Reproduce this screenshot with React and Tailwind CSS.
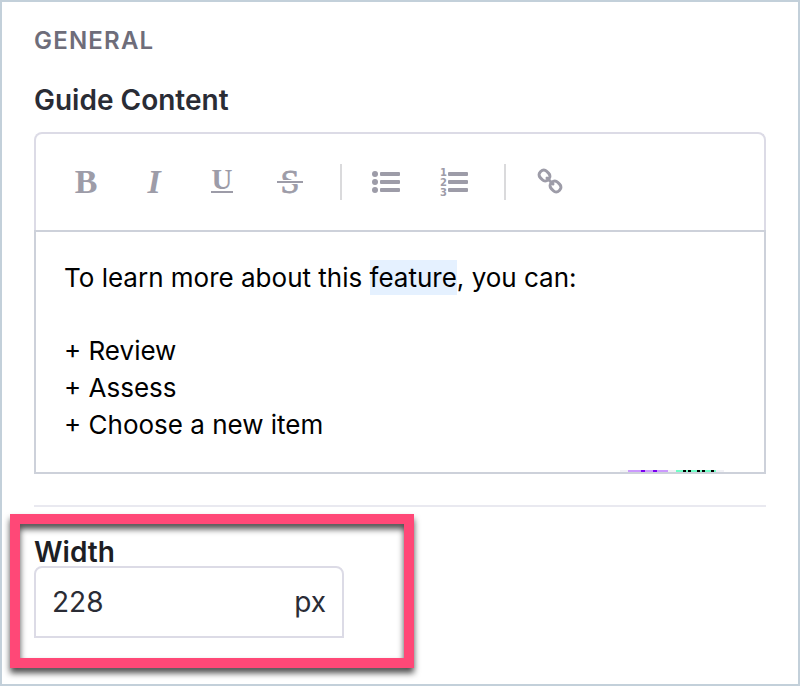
import { useState } from 'react';

function ToolbarButton({ label, children }) {
  return (
    <button
      type="button"
      aria-label={label}
      title={label}
      className="flex h-9 w-9 items-center justify-center text-[#9d9ca8] hover:text-[#6e6d7a]"
    >
      {children}
    </button>
  );
}

function Separator() {
  return <div className="h-9 w-[2px] bg-[#dadadc]" />;
}

function ListLines() {
  return (
    <>
      <rect x="8" y="4" width="20" height="4" rx="1" />
      <rect x="8" y="12" width="20" height="4" rx="1" />
      <rect x="8" y="20" width="20" height="4" rx="1" />
    </>
  );
}

function Toolbar() {
  return (
    <div
      role="toolbar"
      aria-label="Formatting"
      className="flex h-[98px] items-center rounded-t-lg border-2 border-b-0 border-[#dcdbe6] pl-8 font-['Liberation_Serif',serif]"
    >
      <div className="flex gap-8">
        <ToolbarButton label="Bold">
          <span className="text-[34px] leading-9 font-bold">B</span>
        </ToolbarButton>
        <ToolbarButton label="Italic">
          <span className="text-[34px] leading-9 font-bold italic">I</span>
        </ToolbarButton>
        <ToolbarButton label="Underline">
          <svg width="28" height="36" viewBox="0 0 28 36" fill="currentColor" className="overflow-visible">
            <text x="14" y="25" fontSize="29" fontWeight="700" textAnchor="middle">U</text>
            <rect x="3" y="27" width="22" height="2" />
          </svg>
        </ToolbarButton>
        <ToolbarButton label="Strikethrough">
          <svg width="26" height="36" viewBox="0 0 26 36" fill="currentColor" className="overflow-visible">
            <text x="13" y="29" fontSize="34" textAnchor="middle" stroke="currentColor" strokeWidth="0.8">S</text>
            <rect y="16" width="26" height="4" fill="#fff" />
            <rect y="17" width="26" height="2" />
          </svg>
        </ToolbarButton>
      </div>
      <div className="ml-8 flex items-center">
        <Separator />
        <div className="mr-8 ml-[26px] flex gap-8">
          <ToolbarButton label="Bullet list">
            <svg width="28" height="28" viewBox="0 0 28 28" fill="currentColor">
              <circle cx="3" cy="6" r="3" />
              <circle cx="3" cy="14" r="3" />
              <circle cx="3" cy="22" r="3" />
              <ListLines />
            </svg>
          </ToolbarButton>
          <ToolbarButton label="Numbered list">
            <svg width="28" height="28" viewBox="0 0 28 28" fill="currentColor" className="overflow-visible">
              <g fontFamily="DejaVu Sans, sans-serif" fontSize="10" fontWeight="700">
                <text x="0" y="8">1</text>
                <text x="0" y="18">2</text>
                <text x="0" y="28">3</text>
              </g>
              <ListLines />
            </svg>
          </ToolbarButton>
        </div>
        <Separator />
        <div className="ml-[26px]">
          <ToolbarButton label="Link">
            <svg width="28" height="28" viewBox="0 0 28 28" fill="none" stroke="currentColor" strokeWidth="3" strokeLinecap="round">
              <rect x="3" y="3" width="11" height="9" rx="4" transform="rotate(45 8.5 7.5)" />
              <rect x="14" y="14" width="11" height="9" rx="4" transform="rotate(45 19.5 18.5)" />
              <path d="M11 10l6 6" />
            </svg>
          </ToolbarButton>
        </div>
      </div>
    </div>
  );
}

function GuideContent() {
  return (
    <section>
      <h3 className="text-[28px] leading-8 font-semibold text-[#2a2c35]">Guide Content</h3>
      <div className="mt-4">
        <Toolbar />
        <div className="relative overflow-hidden border-2 border-[#cdd1da] px-7 pt-7 pb-[29px] text-[26px] text-black">
          <p className="leading-9">
            To learn more about this <mark className="bg-[#e5f1ff] py-[2px] text-inherit">feature</mark>, you can:
          </p>
          <div className="mt-9 leading-[37px]">
            <p>+ Review</p>
            <p>+ Assess</p>
            <p>+ Choose a new item</p>
          </div>

          {/* Top edge of the helper badges, clipped by the editor */}
          <div className="absolute right-10 bottom-0 flex h-[2px] gap-2 bg-[#f1f1f6] px-2">
            <div className="flex w-10 gap-2 bg-[#cb99fd] pl-[13px]">
              <div className="w-1 bg-[#7a00f0]" />
              <div className="w-1 bg-[#7a00f0]" />
            </div>
            <div className="flex w-10 gap-[2px] bg-[#70ffc6] pl-[7px]">
              <div className="w-[3px] bg-black" />
              <div className="mr-1 w-[3px] bg-black" />
              <div className="w-[3px] bg-black" />
              <div className="mr-1 w-[3px] bg-black" />
              <div className="w-[3px] bg-black" />
            </div>
          </div>
        </div>
      </div>
    </section>
  );
}

function WidthField() {
  const [width, setWidth] = useState('228');

  return (
    <section className="relative w-[310px]">
      <label htmlFor="guide-width" className="block text-[28px] leading-7 font-semibold text-[#1d1e24]">
        Width
      </label>
      <div className="flex h-[72px] items-center rounded-t-lg border-2 border-[#dcdbe6] px-4 text-[28px] text-[#2a2c35]">
        <input
          id="guide-width"
          type="text"
          inputMode="numeric"
          value={width}
          onChange={(e) => setWidth(e.target.value)}
          className="min-w-0 flex-1 bg-transparent outline-none"
        />
        <span>px</span>
      </div>

      {/* Callout frame */}
      <div className="pointer-events-none absolute -top-6 -right-[70px] -bottom-[30px] -left-6 border-10 border-[#ff4877] drop-shadow-[0_5px_3px_rgba(0,0,0,0.7)]" />
    </section>
  );
}

export default function App() {
  return (
    <main className="min-h-screen border-2 border-[#c3d0da] bg-white px-8 pt-6 pb-[46px] font-['Inter',sans-serif]">
      <h2 className="text-[24px] leading-[30px] font-semibold tracking-wider text-[#6e6d7a]">GENERAL</h2>
      <div className="mt-7">
        <GuideContent />
      </div>
      <hr className="my-[31px] border-t-2 border-[#e9e9f0]" />
      <WidthField />
    </main>
  );
}
